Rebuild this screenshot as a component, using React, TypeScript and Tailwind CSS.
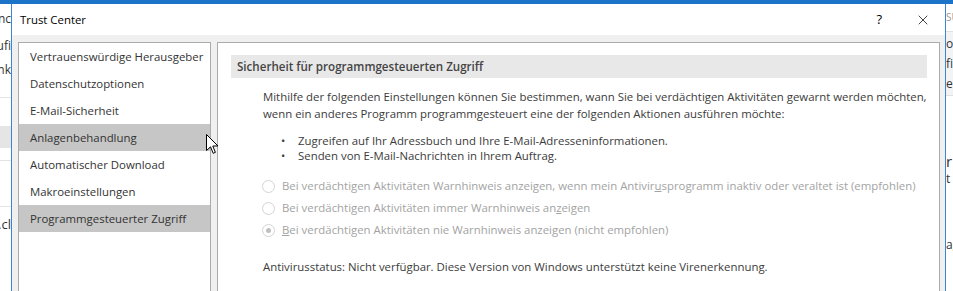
import { X } from "lucide-react";

const menu = [
  { label: "Vertrauenswürdige Herausgeber" },
  { label: "Datenschutzoptionen" },
  { label: "E-Mail-Sicherheit" },
  { label: "Anlagenbehandlung", hover: true },
  { label: "Automatischer Download" },
  { label: "Makroeinstellungen" },
  { label: "Programmgesteuerter Zugriff", selected: true },
];

const Radio = ({ checked }: { checked?: boolean }) => (
  <span className="w-[13px] h-[13px] rounded-full border border-[#d4d4d4] bg-white flex items-center justify-center shrink-0">
    {checked && <span className="w-[5px] h-[5px] rounded-full bg-[#c0c0c0]" />}
  </span>
);

const App = () => {
  return (
    <div
      className="w-[953px] h-[291px] overflow-hidden bg-white flex flex-col relative text-[#3b3b3b] whitespace-nowrap"
      style={{ fontFamily: '"Segoe UI", "Open Sans", sans-serif' }}
    >
      <div className="h-[4px] bg-[#1b74c8] shrink-0" />
      <div className="flex flex-1 min-h-0">
        {/* background window, left side */}
        <div className="w-[11px] shrink-0 overflow-hidden flex flex-col text-[12px] text-[#333]">
          <div className="h-[30px] flex items-center justify-end">Synchronc</div>
          <div className="h-[24px] flex items-center justify-end">Aufi</div>
          <div className="h-[24px] flex items-center justify-end">Link</div>
          <div className="h-[16px] border-b border-[#e3e3e3]" />
          <div className="h-[28px]" />
          <div className="h-[22px] bg-[#e5e5e5]" />
          <div className="h-[13px] border-b border-[#e3e3e3]" />
          <div className="h-[46px] border-b border-[#e3e3e3]" />
          <div className="h-[27px] flex items-end justify-end text-[13px]">Datei.cl</div>
        </div>

        {/* dialog */}
        <div className="w-[935px] shrink-0 border-x border-[#3a86d4] flex flex-col overflow-hidden">
          <div className="h-[31px] bg-white flex items-center pl-[8px] shrink-0">
            <span className="text-[11.4px] text-black">Trust Center</span>
            <span className="ml-auto text-[13px] text-black mr-[33px]">?</span>
            <X className="w-[16px] h-[16px] mr-[14px] text-black" strokeWidth={1.1} />
          </div>
          <div className="flex-1 bg-[#f0f0f0] flex items-start gap-[6px] pt-[7px] px-[6px]">
            <div className="w-[193px] h-[280px] shrink-0 border border-[#ababab] bg-white text-[#333]">
              {menu.map((m) => (
                <div
                  key={m.label}
                  className={`h-[27px] flex items-center pl-[11px] text-[11.4px] ${
                    m.hover || m.selected ? "bg-[#c6c6c6]" : ""
                  }`}
                >
                  {m.label}
                </div>
              ))}
            </div>
            <div className="flex-1 h-[280px] border border-[#ababab] bg-white pt-[12px] pl-[13px] pr-[12px] text-[11.4px]">
              <div className="h-[23px] bg-[#e8e8e8] flex items-center pl-[6px] font-semibold text-[#444] text-[11.6px]">
                Sicherheit für programmgesteuerten Zugriff
              </div>
              <div className="pl-[32px]">
                <p className="mt-[10px] leading-[17px]">
                  Mithilfe der folgenden Einstellungen können Sie bestimmen, wann Sie bei verdächtigen Aktivitäten gewarnt werden möchten,
                  <br />
                  wenn ein anderes Programm programmgesteuert eine der folgenden Aktionen ausführen möchte:
                </p>
                <ul className="mt-[11px] pl-[18px] leading-[15px]">
                  <li className="flex">
                    <span className="w-[17px]">•</span>Zugreifen auf Ihr Adressbuch und Ihre E-Mail-Adresseninformationen.
                  </li>
                  <li className="flex">
                    <span className="w-[17px]">•</span>Senden von E-Mail-Nachrichten in Ihrem Auftrag.
                  </li>
                </ul>
                <div className="mt-[12px] text-[#a3a3a3]">
                  <div className="h-[22px] flex items-center gap-[7px] -ml-[1px]">
                    <Radio />
                    <span>
                      Bei verdächtigen Aktivitäten Warnhinweis anzeigen, wenn mein Antivir<u>u</u>sprogramm inaktiv oder veraltet ist (empfohlen)
                    </span>
                  </div>
                  <div className="h-[22px] flex items-center gap-[7px] -ml-[1px]">
                    <Radio />
                    <span>
                      Bei verdächtigen Aktivitäten immer Warnhinweis an<u>z</u>eigen
                    </span>
                  </div>
                  <div className="h-[22px] flex items-center gap-[7px] -ml-[1px]">
                    <Radio checked />
                    <span>
                      <u>B</u>ei verdächtigen Aktivitäten nie Warnhinweis anzeigen (nicht empfohlen)
                    </span>
                  </div>
                </div>
                <p className="mt-[17px] leading-[17px]">
                  Antivirusstatus: Nicht verfügbar. Diese Version von Windows unterstützt keine Virenerkennung.
                </p>
              </div>
            </div>
          </div>
        </div>

        {/* background window, right side */}
        <div className="flex-1 overflow-hidden flex flex-col text-[12px] text-[#333]">
          <div className="h-[27px] flex items-center text-[10px] text-[#999]">SUCHE</div>
          <div className="h-[65px] bg-[#f3f3f3] border-y border-[#e0e0e0] flex flex-col justify-center gap-[4px] leading-[16px]">
            <span>ok</span>
            <span>fi</span>
            <span>e</span>
          </div>
          <div className="h-[56px]" />
          <div className="text-[15px] leading-[18px]">r</div>
          <div className="leading-[18px]">t</div>
          <div className="h-[48px]" />
          <div>ag</div>
        </div>
      </div>

      {/* mouse cursor */}
      <svg className="absolute left-[206px] top-[134px]" width="13" height="21" viewBox="0 0 13 21">
        <path d="M0.5 0.5 L0.5 16.5 L4.5 12.8 L7.2 19.3 L9.4 18.4 L6.8 12 L12 12 Z" fill="white" stroke="black" strokeWidth="1" strokeLinejoin="miter" />
      </svg>
    </div>
  );
};

export default App;
